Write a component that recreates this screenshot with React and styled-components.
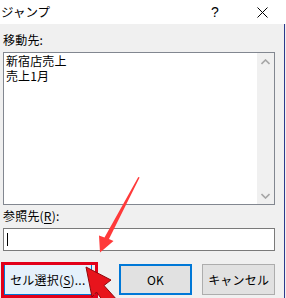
import React from "react"
import styled, { createGlobalStyle } from "styled-components"

const GlobalStyle = createGlobalStyle`
  html, body {
    margin: 0;
    padding: 0;
    background: #f0f0f0;
  }
  body {
    font-family: "Noto Sans CJK JP", "Noto Sans", sans-serif;
    font-size: 12px;
    color: #000;
  }
`

const Window = styled.div`
  position: relative;
  width: 286px;
  height: 298px;
  overflow: hidden;
  background: #f0f0f0;
`

const TitleBar = styled.div`
  height: 24px;
  background: #fff;
  display: flex;
  align-items: center;
  padding-left: 1px;
`

const Title = styled.span`
  flex: 1;
  font-size: 12.5px;
  line-height: 16px;
  margin-top: -1px;
`

const Help = styled.span`
  width: 10px;
  font-family: "Liberation Sans", sans-serif;
  font-size: 14px;
  line-height: 16px;
  margin-right: 36px;
`

const Close = styled.svg`
  width: 11px;
  height: 11px;
  margin-right: 18px;
`

const Body = styled.div`
  height: 274px;
  box-sizing: border-box;
  padding: 7px 9px 0 3px;
  border-right: 1px solid #2c3a8c;
  width: 285px;
`

const Label = styled.div`
  line-height: 17px;
  height: 17px;
  margin-top: ${(p) => p.$top || 0}px;
  margin-bottom: 4px;
  letter-spacing: 0.2px;
`

const Key = styled.span`
  text-decoration: underline;
  text-underline-offset: 2px;
`

const ListBox = styled.div`
  height: 153px;
  box-sizing: border-box;
  border: 1px solid #828790;
  background: #fff;
  display: flex;
`

const Items = styled.div`
  flex: 1;
  padding: 0 0 0 2px;
`

const Item = styled.div`
  line-height: 15px;
  height: 15px;
  letter-spacing: 0.1px;
`

const ScrollBar = styled.div`
  width: 17px;
  background: #f0f0f0;
  display: flex;
  flex-direction: column;
  justify-content: space-between;
  align-items: center;
  padding: 6px 0 5px;
`

const Chevron = styled.svg`
  width: 9px;
  height: 6px;
`

const Input = styled.div`
  height: 23px;
  box-sizing: border-box;
  border: 1px solid #7a7a7a;
  background: #fff;
  display: flex;
  align-items: center;
  padding-left: 3px;
`

const Caret = styled.span`
  width: 1px;
  height: 13px;
  background: #000;
`

const ButtonRow = styled.div`
  display: flex;
  margin-top: 13px;
  padding-left: 1px;
`

const Button = styled.div`
  position: relative;
  height: 31px;
  width: ${(p) => p.$w}px;
  margin-left: ${(p) => p.$ml || 0}px;
  box-sizing: border-box;
  display: flex;
  align-items: center;
  justify-content: center;
  background: ${(p) => (p.$hover ? "#e5f1fb" : "#e1e1e1")};
  border: ${(p) =>
    p.$default ? "2px solid #0078d7" : p.$hover ? "1px solid #0078d7" : "1px solid #adadad"};
  letter-spacing: 0.2px;
`

const Highlight = styled.span`
  position: absolute;
  left: -4px;
  top: -3px;
  right: -7px;
  bottom: -4px;
  border: 3px solid #e2001a;
  pointer-events: none;
`

const Overlay = styled.svg`
  position: absolute;
  left: 0;
  top: 0;
  width: 286px;
  height: 298px;
  pointer-events: none;
`

const App = () => {
  return (
    <Window>
      <GlobalStyle />
      <TitleBar>
        <Title>ジャンプ</Title>
        <Help>?</Help>
        <Close viewBox="0 0 11 11">
          <path d="M0.5 0.5 L10.5 10.5 M10.5 0.5 L0.5 10.5" stroke="#000" strokeWidth="1" />
        </Close>
      </TitleBar>
      <Body>
        <Label>移動先:</Label>
        <ListBox>
          <Items>
            <Item>新宿店売上</Item>
            <Item>売上1月</Item>
          </Items>
          <ScrollBar>
            <Chevron viewBox="0 0 9 6">
              <path d="M0.5 5 L4.5 1 L8.5 5" fill="none" stroke="#a6a6a6" strokeWidth="1.6" />
            </Chevron>
            <Chevron viewBox="0 0 9 6">
              <path d="M0.5 1 L4.5 5 L8.5 1" fill="none" stroke="#a6a6a6" strokeWidth="1.6" />
            </Chevron>
          </ScrollBar>
        </ListBox>
        <Label $top={2}>
          参照先(<Key>R</Key>):
        </Label>
        <Input>
          <Caret />
        </Input>
        <ButtonRow>
          <Button $w={88} $hover>
            セル選択(<Key>S</Key>)...
            <Highlight />
          </Button>
          <Button $w={74} $ml={27} $default>
            OK
          </Button>
          <Button $w={73} $ml={10}>
            キャンセル
          </Button>
        </ButtonRow>
      </Body>
      <Overlay viewBox="0 0 286 298">
        <polygon
          points="138.3,177 139.6,177.6 109,239 113.5,241 100,252.5 99,235.5 104.5,237.5"
          fill="#ff3a3a"
        />
        <polygon
          points="86,267 111,280 104,285.5 118,301 108,308 96.5,292 92,297"
          fill="#e8141c"
          stroke="#8e0a0e"
          strokeWidth="1"
          strokeLinejoin="round"
        />
      </Overlay>
    </Window>
  )
}

export default App
